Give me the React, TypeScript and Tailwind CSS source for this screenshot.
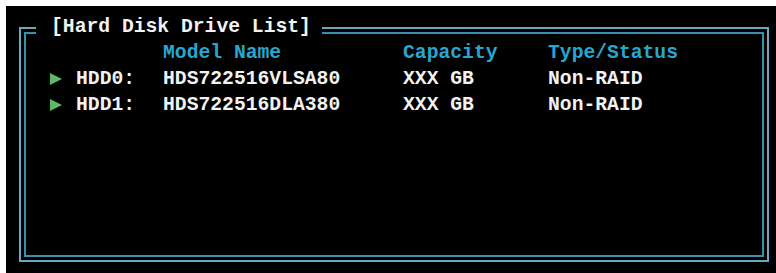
import React from "react";

const drives = [
  { id: "HDD0:", model: "HDS722516VLSA80", capacity: "XXX GB", status: "Non-RAID" },
  { id: "HDD1:", model: "HDS722516DLA380", capacity: "XXX GB", status: "Non-RAID" },
];

function Arrow() {
  return (
    <svg width="12" height="12" viewBox="0 0 12 12" className="block">
      <polygon points="0,0 12,6 0,12" fill="#5fb865" />
    </svg>
  );
}

export default function App() {
  return (
    <div className="w-[776px] h-[273px] bg-white pt-[6px] pl-[6px]">
      <div
        className="relative h-full bg-black pl-[13px] pt-[21px] text-[19.7px] font-bold leading-[26px]"
        style={{ fontFamily: '"Liberation Mono", "Courier New", monospace' }}
      >
        {/* double frame */}
        <div className="w-[750px] h-[235px] border-2 border-[#6aa8bd] p-[3px]">
          <div className="h-full border-2 border-[#3a90aa] pt-[6px] pl-[24px]">
            <div className="grid grid-cols-[26px_87px_240px_145px_1fr] items-center">
              <div />
              <div />
              <div className="text-[#29a6cf]">Model Name</div>
              <div className="text-[#29a6cf]">Capacity</div>
              <div className="text-[#29a6cf]">Type/Status</div>

              {drives.map((d) => (
                <React.Fragment key={d.id}>
                  <div className="flex items-center h-[26px]">
                    <Arrow />
                  </div>
                  <div className="text-[#f2f2f2]">{d.id}</div>
                  <div className="text-[#f2f2f2]">{d.model}</div>
                  <div className="text-[#f2f2f2]">{d.capacity}</div>
                  <div className="text-[#f2f2f2]">{d.status}</div>
                </React.Fragment>
              ))}
            </div>
          </div>
        </div>

        {/* title sits over the top frame lines */}
        <div className="absolute left-[30px] top-[8px] w-[286px] bg-black pl-[15px] text-[#f2f2f2] whitespace-pre">
          [Hard Disk Drive List]
        </div>
      </div>
    </div>
  );
}
